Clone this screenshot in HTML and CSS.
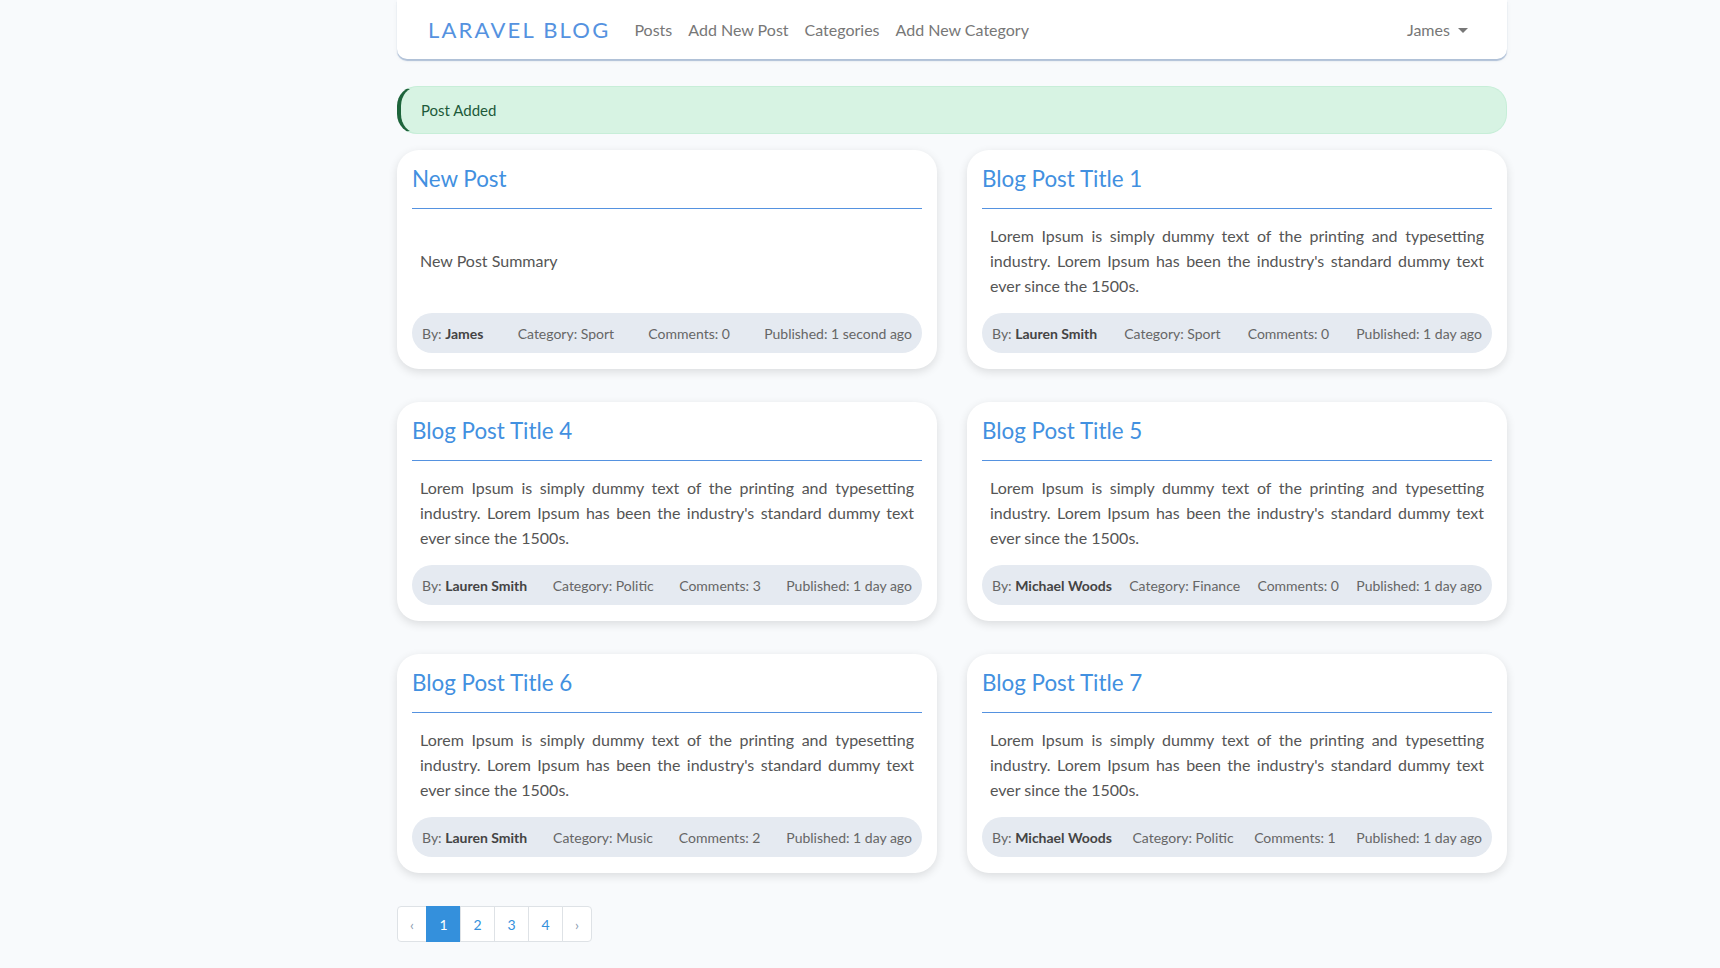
FILE: index.html
```html
<!DOCTYPE html>
<html lang="en">
<head>
<meta charset="utf-8">
<title>Laravel Blog</title>
<link rel="stylesheet" href="styles.css">
</head>
<body>
<div class="wrapper">
  <nav class="navbar">
    <a class="brand" href="#">LARAVEL BLOG</a>
    <ul class="nav-links">
      <li><a href="#">Posts</a></li>
      <li><a href="#">Add New Post</a></li>
      <li><a href="#">Categories</a></li>
      <li><a href="#">Add New Category</a></li>
    </ul>
    <a class="user" href="#">James <span class="caret"></span></a>
  </nav>

  <div class="alert">Post Added</div>

  <div class="grid">
    <article class="card">
      <h2 class="card-title">New Post</h2>
      <div class="card-body"><p>New Post Summary</p></div>
      <div class="meta"><span>By: <b>James</b></span><span>Category: Sport</span><span>Comments: 0</span><span>Published: 1 second ago</span></div>
    </article>
    <article class="card">
      <h2 class="card-title">Blog Post Title 1</h2>
      <div class="card-body"><p>Lorem Ipsum is simply dummy text of the printing and typesetting industry. Lorem Ipsum has been the industry's standard dummy text ever since the 1500s.</p></div>
      <div class="meta"><span>By: <b>Lauren Smith</b></span><span>Category: Sport</span><span>Comments: 0</span><span>Published: 1 day ago</span></div>
    </article>
    <article class="card">
      <h2 class="card-title">Blog Post Title 4</h2>
      <div class="card-body"><p>Lorem Ipsum is simply dummy text of the printing and typesetting industry. Lorem Ipsum has been the industry's standard dummy text ever since the 1500s.</p></div>
      <div class="meta"><span>By: <b>Lauren Smith</b></span><span>Category: Politic</span><span>Comments: 3</span><span>Published: 1 day ago</span></div>
    </article>
    <article class="card">
      <h2 class="card-title">Blog Post Title 5</h2>
      <div class="card-body"><p>Lorem Ipsum is simply dummy text of the printing and typesetting industry. Lorem Ipsum has been the industry's standard dummy text ever since the 1500s.</p></div>
      <div class="meta"><span>By: <b>Michael Woods</b></span><span>Category: Finance</span><span>Comments: 0</span><span>Published: 1 day ago</span></div>
    </article>
    <article class="card">
      <h2 class="card-title">Blog Post Title 6</h2>
      <div class="card-body"><p>Lorem Ipsum is simply dummy text of the printing and typesetting industry. Lorem Ipsum has been the industry's standard dummy text ever since the 1500s.</p></div>
      <div class="meta"><span>By: <b>Lauren Smith</b></span><span>Category: Music</span><span>Comments: 2</span><span>Published: 1 day ago</span></div>
    </article>
    <article class="card">
      <h2 class="card-title">Blog Post Title 7</h2>
      <div class="card-body"><p>Lorem Ipsum is simply dummy text of the printing and typesetting industry. Lorem Ipsum has been the industry's standard dummy text ever since the 1500s.</p></div>
      <div class="meta"><span>By: <b>Michael Woods</b></span><span>Category: Politic</span><span>Comments: 1</span><span>Published: 1 day ago</span></div>
    </article>
  </div>

  <ul class="pagination">
    <li class="page-item arrow">&lsaquo;</li>
    <li class="page-item active">1</li>
    <li class="page-item">2</li>
    <li class="page-item">3</li>
    <li class="page-item">4</li>
    <li class="page-item arrow">&rsaquo;</li>
  </ul>
</div>
</body>
</html>
```
FILE: styles.css
```css
* { box-sizing: border-box; }

body {
  margin: 0;
  background: #f8fafc;
  font-family: Lato, "Open Sans", sans-serif;
  color: #555;
}

a { text-decoration: none; }

.wrapper {
  width: 1110px;
  margin-left: 397px;
}

.navbar {
  height: 59px;
  background: #fff;
  border-radius: 0 0 10px 10px;
  box-shadow: 0 2px 1px rgba(120, 150, 190, 0.55), 0 1px 6px rgba(0, 0, 0, 0.04);
  display: flex;
  align-items: center;
  padding: 0 31px;
}

.brand {
  color: #5592e0;
  font-size: 22px;
  letter-spacing: 2.2px;
  margin-right: 16px;
}

.nav-links {
  display: flex;
  list-style: none;
  margin: 0;
  padding: 0;
  flex: 1;
}

.nav-links a,
.user {
  display: block;
  padding: 8px;
  font-size: 16px;
  color: #777;
}

.caret {
  display: inline-block;
  width: 0;
  height: 0;
  margin-left: 4px;
  vertical-align: 3px;
  border-top: 5px solid #777;
  border-left: 5px solid transparent;
  border-right: 5px solid transparent;
}

.alert {
  margin-top: 27px;
  height: 48px;
  display: flex;
  align-items: center;
  padding-left: 20px;
  background: #d7f3e3;
  border: 1px solid #c7eed8;
  border-left: 4px solid #1d643b;
  border-radius: 20px;
  color: #1d5a3a;
  font-size: 15px;
}

.grid {
  margin-top: 16px;
  display: grid;
  grid-template-columns: 540px 540px;
  column-gap: 30px;
  row-gap: 33px;
}

.card {
  background: #fff;
  border-radius: 22px;
  box-shadow: 0 3px 10px rgba(0, 0, 0, 0.12);
  padding: 16px 15px 16px;
  display: flex;
  flex-direction: column;
}

.card-title {
  margin: 0;
  font-weight: 400;
  font-size: 22.4px;
  line-height: 25px;
  color: #4290e0;
  padding-bottom: 17px;
  border-bottom: 1.5px solid #5592e0;
}

.card-body {
  flex: 1;
  display: flex;
  align-items: center;
  padding: 14px 8px 15px;
}

.card-body p {
  margin: 0;
  font-size: 16px;
  line-height: 25px;
  text-align: justify;
  color: #555;
}

.meta {
  height: 40px;
  background: #e5eaf1;
  border-radius: 20px;
  display: flex;
  justify-content: space-between;
  align-items: center;
  padding: 0 10px;
  font-size: 14px;
  color: #666;
}

.meta b { color: #444; }

.pagination {
  display: flex;
  list-style: none;
  margin: 33px 0 0;
  padding: 0;
}

.page-item {
  height: 36px;
  width: 35px;
  display: flex;
  align-items: center;
  justify-content: center;
  font-size: 14px;
  color: #3490dc;
  background: #fff;
  border: 1px solid #dee2e6;
  margin-left: -1px;
}

.page-item.arrow { width: 30px; color: #8a9bb0; }
.page-item:first-child { margin-left: 0; border-radius: 4px 0 0 4px; }
.page-item:last-child { border-radius: 0 4px 4px 0; }
.page-item.active { background: #3490dc; border-color: #3490dc; color: #fff; }
```
